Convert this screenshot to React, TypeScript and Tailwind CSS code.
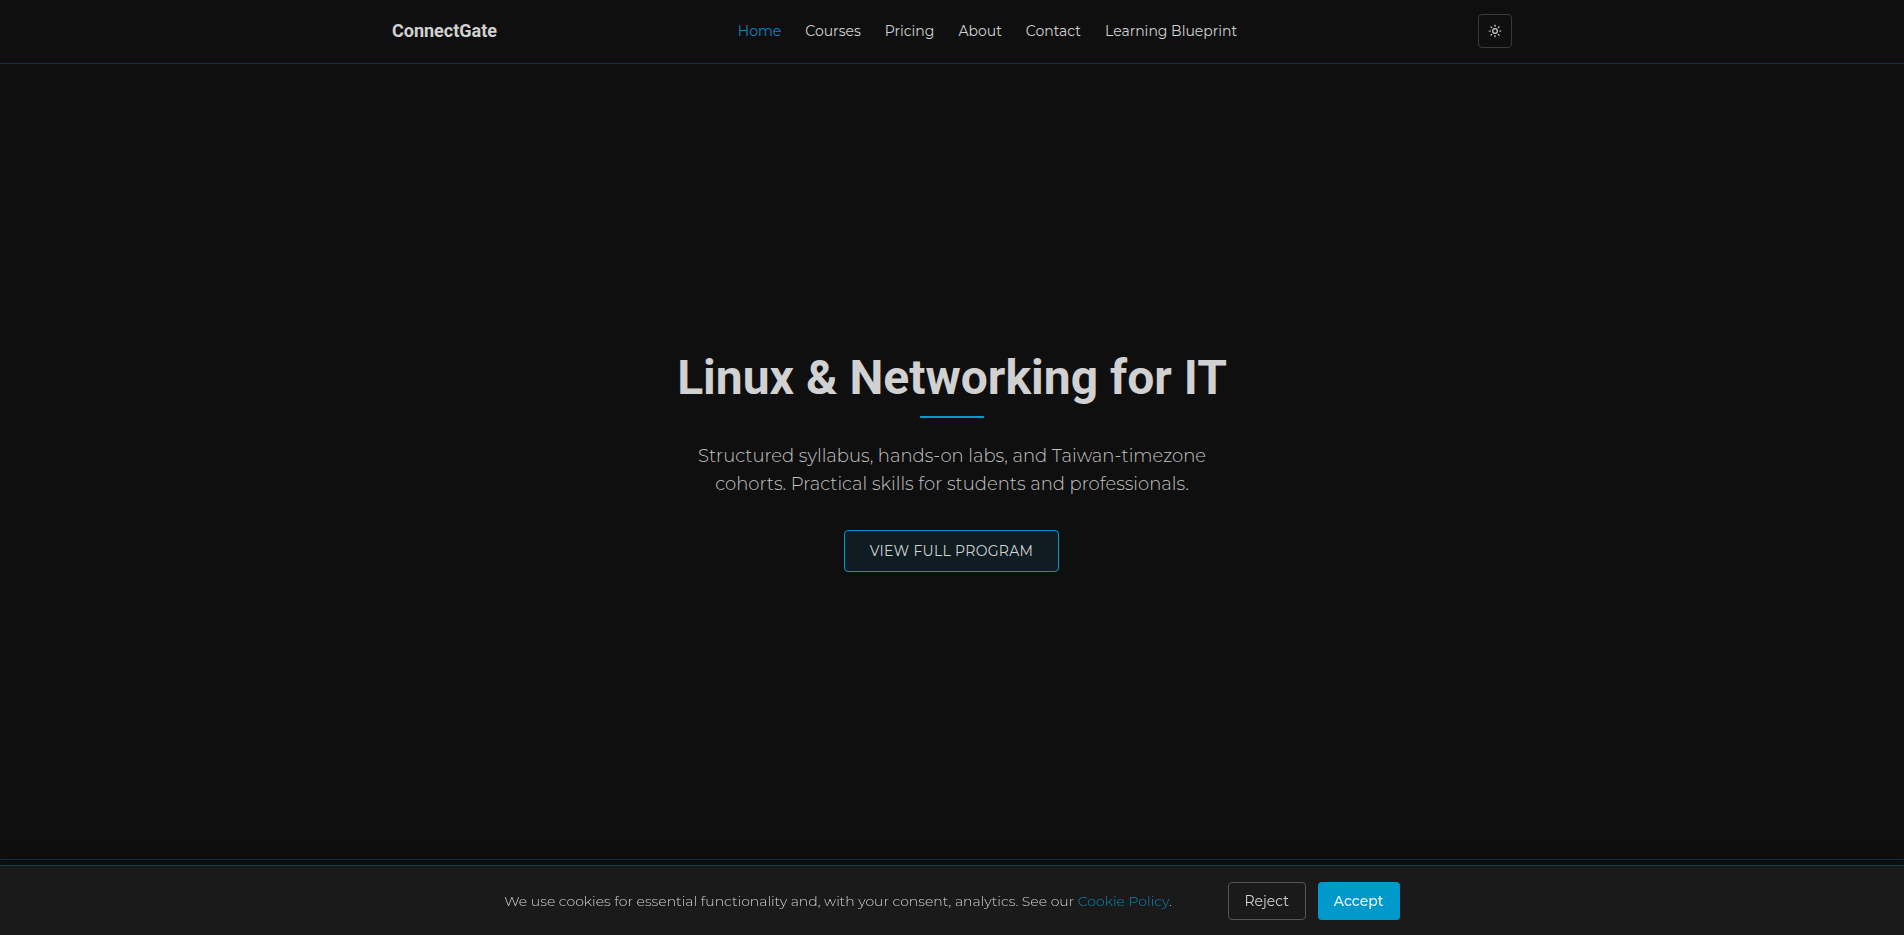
import { Sun } from "lucide-react";

const links = ["Home", "Courses", "Pricing", "About", "Contact", "Learning Blueprint"];

export default function App() {
  return (
    <div className="relative h-[935px] overflow-hidden bg-[#0f0f0f] font-['Montserrat',Inter,sans-serif] text-[#d1d1d1]">
      <header className="h-[64px] border-b border-[#0f3340]">
        <div className="mx-auto flex h-[62px] max-w-6xl items-center justify-between px-4">
          <a className="pb-[2px] font-['Roboto',sans-serif] text-[18px] font-bold text-[#d1d1d1]">ConnectGate</a>
          <nav className="flex items-center gap-6 text-sm font-normal">
            {links.map((l, i) => (
              <a key={l} className={i === 0 ? "text-[#0a85cc]" : "text-[#d1d1d1]"}>{l}</a>
            ))}
          </nav>
          <button className="flex h-[34px] w-[34px] items-center justify-center rounded border border-[#3a3a3a]">
            <Sun size={14} />
          </button>
        </div>
      </header>
      <main className="flex h-[795px] flex-col items-center justify-center pb-[4px] text-center">
        <h1 className="font-['Roboto',sans-serif] text-[48px] font-bold leading-[60px] text-[#d1d1d1]">Linux &amp; Networking for IT</h1>
        <div className="mt-2 h-[2px] w-16 bg-[#0099cc]"></div>
        <p className="mt-6 text-[18px] font-light leading-[28px] text-[#c4c4c4]">
          Structured syllabus, hands-on labs, and Taiwan-timezone<br />cohorts. Practical skills for students and professionals.
        </p>
        <a className="mt-8 mr-[1px] flex h-[42px] w-[215px] items-center justify-center rounded border border-[#0099cc] bg-[#0f1c22] pt-[1px] text-[14px] uppercase tracking-[0.3px] text-[#d1d1d1]">View full program</a>
      </main>
      <footer className="h-[76px] border-t border-[#0f3340]"></footer>
      <div className="fixed inset-x-0 bottom-0 flex h-[70px] items-center justify-center gap-14 border-t border-[#0f4050] bg-[#1a1a1a] shadow-[0_-4px_16px_rgba(0,0,0,0.3)]">
        <p className="text-sm font-light text-[#d1d1d1]">
          We use cookies for essential functionality and, with your consent, analytics. See our <a className="text-[#0a85b3]">Cookie Policy</a>.
        </p>
        <div className="flex gap-3">
          <button className="h-[38px] w-[78px] rounded border border-[#555555] text-sm text-[#d1d1d1]">Reject</button>
          <button className="h-[38px] w-[82px] rounded bg-[#0099cc] text-sm font-medium text-[#e8f4f8]">Accept</button>
        </div>
      </div>
    </div>
  );
}
